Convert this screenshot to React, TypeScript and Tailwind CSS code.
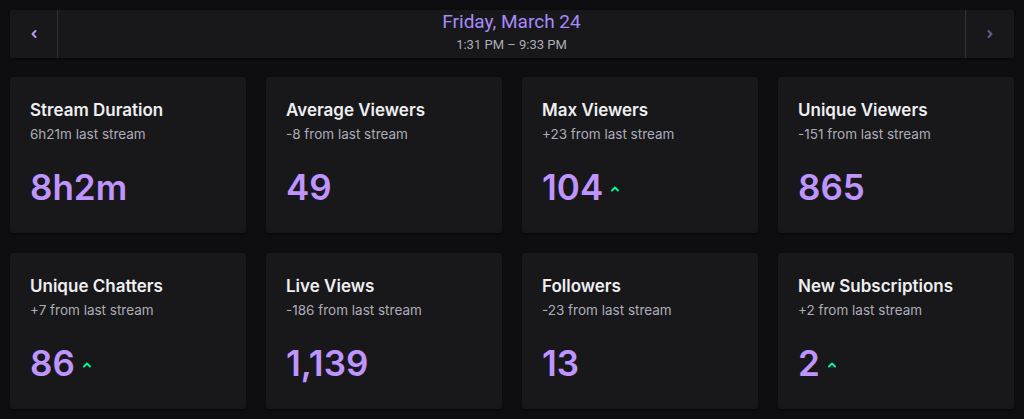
import React from "react";

type Stat = {
  title: string;
  sub: string;
  value: string;
  up?: boolean;
};

const STATS: Stat[] = [
  { title: "Stream Duration", sub: "6h21m last stream", value: "8h2m" },
  { title: "Average Viewers", sub: "-8 from last stream", value: "49" },
  { title: "Max Viewers", sub: "+23 from last stream", value: "104", up: true },
  { title: "Unique Viewers", sub: "-151 from last stream", value: "865" },
  { title: "Unique Chatters", sub: "+7 from last stream", value: "86", up: true },
  { title: "Live Views", sub: "-186 from last stream", value: "1,139" },
  { title: "Followers", sub: "-23 from last stream", value: "13" },
  { title: "New Subscriptions", sub: "+2 from last stream", value: "2", up: true },
];

function Chevron({ dir, className }: { dir: "left" | "right"; className?: string }) {
  return (
    <svg width="8" height="10" viewBox="0 0 8 10" className={className}>
      <polyline
        points={dir === "left" ? "5.5,2 2.5,5 5.5,8" : "2.5,2 5.5,5 2.5,8"}
        fill="none"
        stroke="currentColor"
        strokeWidth="2"
        strokeLinecap="round"
        strokeLinejoin="round"
      />
    </svg>
  );
}

function Caret() {
  return (
    <svg width="10" height="8" viewBox="0 0 10 8" className="text-[#00f593] ml-[7px] mt-[4px]">
      <polyline
        points="2,5.5 5,2.5 8,5.5"
        fill="none"
        stroke="currentColor"
        strokeWidth="2"
        strokeLinecap="round"
        strokeLinejoin="round"
      />
    </svg>
  );
}

function StatCard({ stat }: { stat: Stat }) {
  return (
    <div className="h-[156px] rounded-[4px] bg-[#18181b] px-5 pt-[21px] shadow-[0_1px_3px_rgba(0,0,0,0.5)]">
      <div className="text-[17px] font-semibold leading-[24px] text-[#efeff1]">{stat.title}</div>
      <div className="mt-[2px] text-[13.5px] leading-[20px] text-[#adadb8]">{stat.sub}</div>
      <div className="mt-[22px] flex items-center">
        <span className="text-[35px] font-semibold leading-[42px] text-[#bf94ff]">{stat.value}</span>
        {stat.up && <Caret />}
      </div>
    </div>
  );
}

export default function App() {
  return (
    <div
      className="min-h-[419px] bg-[#0e0e10] p-[10px]"
      style={{ fontFamily: "Inter, 'Noto Sans', sans-serif" }}
    >
      <div className="flex h-[48px] items-stretch rounded-[2px] bg-[#18181b] shadow-[0_1px_3px_rgba(0,0,0,0.5)]">
        <button className="flex w-[48px] items-center justify-center border-r border-[#2f2f35] text-[#bf94ff]">
          <Chevron dir="left" />
        </button>
        <div
          className="flex flex-1 flex-col items-center pt-[1px]"
          style={{ fontFamily: "Roboto, 'Liberation Sans', sans-serif" }}
        >
          <div className="text-[19px] leading-[22px] text-[#a78bfa]">Friday, March 24</div>
          <div className="mt-[4px] text-[13px] leading-[16px] text-[#adadb8]">1:31 PM – 9:33 PM</div>
        </div>
        <button className="flex w-[49px] items-center justify-center border-l border-[#2f2f35] text-[#6b5a8f]">
          <Chevron dir="right" />
        </button>
      </div>
      <div className="mt-[19px] grid grid-cols-4 gap-5">
        {STATS.map((s) => (
          <StatCard key={s.title} stat={s} />
        ))}
      </div>
    </div>
  );
}
